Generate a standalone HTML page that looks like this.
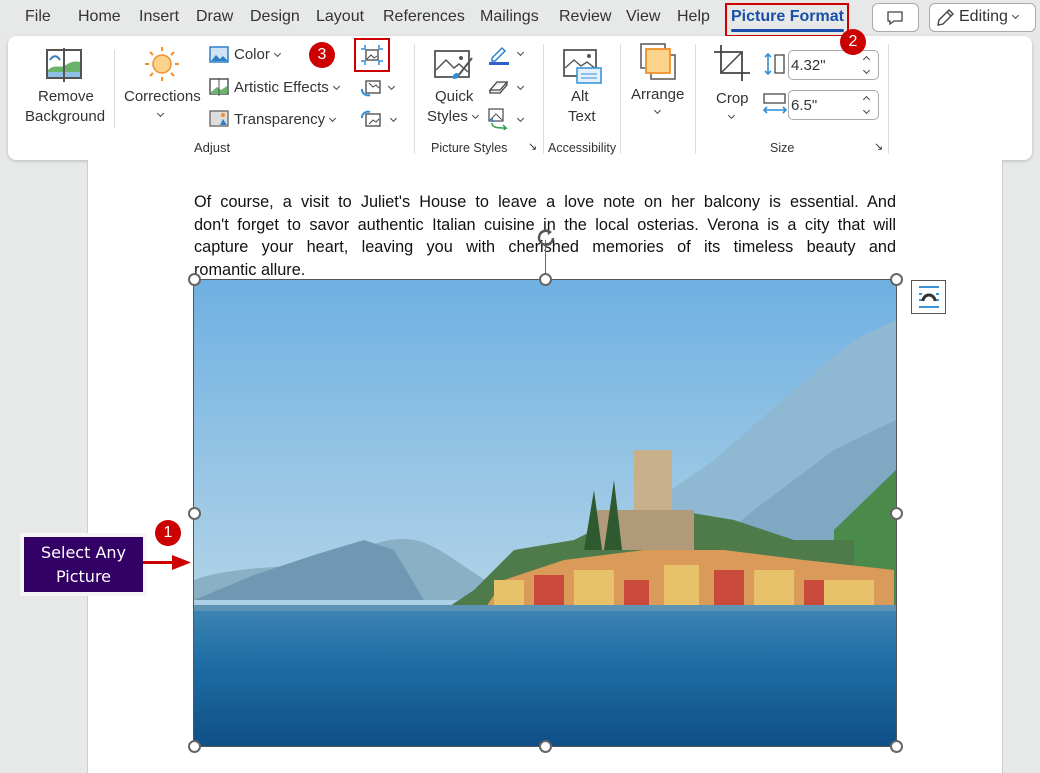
<!DOCTYPE html>
<html><head><meta charset="utf-8"><style>
*{margin:0;padding:0;box-sizing:border-box}
body{width:1040px;height:773px;overflow:hidden;background:#e6e9e7;font-family:"Liberation Sans",sans-serif;position:relative;color:#222}
.abs{position:absolute}
.tab{position:absolute;top:8px;font-size:16px;color:#333}
.ribbon{position:absolute;left:8px;top:36px;width:1024px;height:124px;background:#fff;border-radius:8px;box-shadow:0 1px 3px rgba(0,0,0,.2)}
.t{position:absolute;font-size:15px;color:#333;white-space:nowrap}
.s{position:absolute;font-size:12.5px;color:#333;white-space:nowrap}
.sep{position:absolute;top:44px;width:1px;height:110px;background:#ddd}
.badge{position:absolute;width:26px;height:26px;border-radius:50%;background:#c00;color:#fff;font-size:16px;text-align:center;line-height:26px}
.page{position:absolute;left:87px;top:160px;width:916px;height:613px;background:#fff;border-left:1px solid #ccc;border-right:1px solid #ccc}
.para{position:absolute;left:194px;top:191px;width:702px;font-size:16.3px;line-height:22.6px;color:#111}
.para div{text-align:justify;text-align-last:justify;white-space:nowrap}
.para div.l{text-align-last:left}
.h{position:absolute;width:13px;height:13px;border-radius:50%;border:2px solid #666;background:#fff}
.box{position:absolute;border:1px solid #aaa;border-radius:5px;background:#fff}
.cv{display:inline-block;width:5px;height:5px;border-right:1.3px solid #444;border-bottom:1.3px solid #444;transform:rotate(45deg);margin:0 0 3px 5px;vertical-align:middle}
.cva{position:absolute;width:5px;height:5px;border-right:1.3px solid #444;border-bottom:1.3px solid #444;transform:rotate(45deg)}
.cvu{position:absolute;width:5px;height:5px;border-left:1.3px solid #444;border-top:1.3px solid #444;transform:rotate(45deg)}
</style></head><body>
<div class="tab" style="left:25px">File</div>
<div class="tab" style="left:78px">Home</div>
<div class="tab" style="left:139px">Insert</div>
<div class="tab" style="left:196px">Draw</div>
<div class="tab" style="left:250px">Design</div>
<div class="tab" style="left:316px">Layout</div>
<div class="tab" style="left:383px">References</div>
<div class="tab" style="left:480px">Mailings</div>
<div class="tab" style="left:559px">Review</div>
<div class="tab" style="left:626px">View</div>
<div class="tab" style="left:677px">Help</div>
<div class="tab" style="left:731px;color:#1a4fa8;font-weight:bold">Picture Format</div>
<div class="abs" style="left:731px;top:29px;width:113px;height:3px;background:#1a4fa8;border-radius:2px"></div>
<div class="abs" style="left:725px;top:3px;width:124px;height:34px;border:2px solid #c00"></div>
<div class="box" style="left:872px;top:3px;width:47px;height:29px;border-radius:6px"></div>
<svg class="abs" style="left:886px;top:10px" width="18" height="16"><path d="M2 2h14v9H8l-4 3v-3H2z" fill="none" stroke="#444" stroke-width="1.3"/></svg>
<div class="box" style="left:929px;top:3px;width:107px;height:29px;border-radius:6px"></div>
<svg class="abs" style="left:934px;top:7px" width="22" height="22"><path d="M4 18l1-5L15 3l4 4L9 17z M13 5l4 4" fill="none" stroke="#444" stroke-width="1.4"/></svg>
<div class="t" style="left:959px;top:8px;font-size:16px">Editing<span class="cv"></span></div>

<div class="ribbon"></div>
<svg class="abs" style="left:46px;top:48px" width="38" height="34"><rect x="1" y="2" width="34" height="28" fill="#fff" stroke="#555" stroke-width="2"/><path d="M2 22c6-6 12-2 16-4s8-6 16-4v10H2z" fill="#6bb36b"/><path d="M2 24h32v5H2z" fill="#8fc1e8"/><path d="M4 12c3-5 7-5 10 0" fill="none" stroke="#3a7cc0" stroke-width="2"/><line x1="18" y1="0" x2="18" y2="34" stroke="#555" stroke-width="2"/></svg>
<div class="t" style="left:38px;top:88px">Remove</div>
<div class="t" style="left:25px;top:108px">Background</div>
<div class="sep" style="left:114px;top:50px;height:78px"></div>
<svg class="abs" style="left:143px;top:46px" width="38" height="36"><circle cx="19" cy="18" r="9" fill="#fbd38a" stroke="#f0902a" stroke-width="1.5"/><g stroke="#f0902a" stroke-width="2"><line x1="19" y1="1" x2="19" y2="5"/><line x1="19" y1="31" x2="19" y2="35"/><line x1="2" y1="18" x2="6" y2="18"/><line x1="32" y1="18" x2="36" y2="18"/><line x1="7" y1="6" x2="10" y2="9"/><line x1="28" y1="27" x2="31" y2="30"/><line x1="31" y1="6" x2="28" y2="9"/><line x1="7" y1="30" x2="10" y2="27"/></g></svg>
<div class="t" style="left:124px;top:88px">Corrections</div>
<div class="cva" style="left:158px;top:111px"></div>
<svg class="abs" style="left:209px;top:46px" width="20" height="18"><rect x="1" y="1" width="18" height="15" fill="#cfe3f5" stroke="#2f7fc8" stroke-width="1.5"/><path d="M2 15l5-6 4 4 3-3 5 5z" fill="#2f7fc8"/></svg>
<div class="t" style="left:234px;top:46px">Color<span class="cv"></span></div>
<svg class="abs" style="left:209px;top:78px" width="20" height="18"><rect x="1" y="1" width="18" height="15" fill="#fff" stroke="#555" stroke-width="1.5"/><path d="M2 14l6-5 4 3 6-4v8H2z" fill="#6bb36b"/><line x1="10" y1="0" x2="10" y2="18" stroke="#555"/></svg>
<div class="t" style="left:234px;top:79px">Artistic Effects<span class="cv"></span></div>
<svg class="abs" style="left:209px;top:110px" width="20" height="18"><rect x="1" y="1" width="18" height="15" fill="#ddd" stroke="#777" stroke-width="1.5"/><path d="M11 15l3-6 4 6z" fill="#2f7fc8"/><circle cx="14" cy="5" r="2" fill="#f0902a"/></svg>
<div class="t" style="left:234px;top:111px">Transparency<span class="cv"></span></div>
<div class="badge" style="left:309px;top:42px">3</div>
<div class="abs" style="left:354px;top:38px;width:36px;height:34px;border:2px solid #c00"></div>
<svg class="abs" style="left:360px;top:44px" width="24" height="22"><rect x="6" y="6" width="12" height="10" fill="#fff" stroke="#444" stroke-width="1.3"/><path d="M7 15l4-4 3 3 3-2" fill="none" stroke="#444"/><g stroke="#2f8fd8" stroke-width="1.5" fill="none"><path d="M1 5h4V1M23 5h-4V1M1 17h4v4M23 17h-4v4"/></g></svg>
<svg class="abs" style="left:360px;top:79px" width="22" height="20"><rect x="6" y="2" width="14" height="12" fill="#fff" stroke="#444" stroke-width="1.3"/><path d="M9 4l4 4 3-2 3 3" fill="none" stroke="#444"/><path d="M2 10a6 6 0 0 0 8 6" fill="none" stroke="#2f8fd8" stroke-width="2"/></svg>
<div class="cva" style="left:389px;top:84px"></div>
<svg class="abs" style="left:360px;top:110px" width="22" height="20"><rect x="6" y="4" width="14" height="12" fill="#fff" stroke="#444" stroke-width="1.3"/><path d="M9 14l4-4 3 2 3-3" fill="none" stroke="#444"/><path d="M2 8a6 6 0 0 1 8-6" fill="none" stroke="#2f8fd8" stroke-width="2"/></svg>
<div class="cva" style="left:391px;top:116px"></div>
<div class="t" style="left:194px;top:140px;font-size:13px">Adjust</div>
<div class="sep" style="left:414px"></div>
<svg class="abs" style="left:434px;top:48px" width="40" height="36"><rect x="1" y="3" width="34" height="26" fill="#fff" stroke="#555" stroke-width="1.8"/><path d="M2 22l10-10 8 8 5-4 9 8" fill="none" stroke="#555" stroke-width="1.5"/><circle cx="27" cy="10" r="2" fill="#555"/><path d="M38 10L24 28" stroke="#555" stroke-width="2"/><path d="M18 30c2-6 6-6 7-3 -1 4-4 5-7 3z" fill="#2f8fd8"/></svg>
<div class="t" style="left:435px;top:88px">Quick</div>
<div class="t" style="left:427px;top:108px">Styles<span class="cv"></span></div>
<svg class="abs" style="left:488px;top:44px" width="22" height="22"><path d="M4 14L14 4l3 3L7 17H4z" fill="none" stroke="#2f7fc8" stroke-width="1.5"/><rect x="1" y="18" width="20" height="3" fill="#2f5fc8"/></svg>
<div class="cva" style="left:518px;top:50px"></div>
<svg class="abs" style="left:488px;top:78px" width="22" height="18"><path d="M2 12l7-8h10l-7 8z M2 12v3h10l7-8v-3" fill="#eee" stroke="#444" stroke-width="1.3"/></svg>
<div class="cva" style="left:518px;top:84px"></div>
<svg class="abs" style="left:488px;top:108px" width="24" height="22"><rect x="1" y="1" width="14" height="12" fill="#fff" stroke="#555" stroke-width="1.3"/><path d="M2 12l6-6 6 6" fill="none" stroke="#555"/><path d="M4 15c0 5 6 5 14 5l-3-3m3 3l-3 3" fill="none" stroke="#2f9f4f" stroke-width="1.5"/><path d="M4 14v-4" stroke="#2f8fd8" stroke-width="2"/></svg>
<div class="cva" style="left:518px;top:116px"></div>
<div class="s" style="left:431px;top:141px">Picture Styles</div>
<div class="s" style="left:528px;top:140px;font-size:11px">↘</div>
<div class="sep" style="left:543px"></div>
<svg class="abs" style="left:563px;top:48px" width="40" height="36"><rect x="1" y="2" width="32" height="26" fill="#fff" stroke="#555" stroke-width="1.8"/><path d="M2 20l9-8 7 6 6-4 9 7" fill="none" stroke="#555" stroke-width="1.4"/><circle cx="26" cy="8" r="2" fill="#555"/><rect x="14" y="20" width="24" height="15" fill="#e4f0fb" stroke="#2f8fd8" stroke-width="1.5"/><path d="M18 26h16M18 30h16" stroke="#2f8fd8"/></svg>
<div class="t" style="left:571px;top:88px">Alt</div>
<div class="t" style="left:568px;top:108px">Text</div>
<div class="s" style="left:548px;top:141px">Accessibility</div>
<div class="sep" style="left:620px"></div>
<svg class="abs" style="left:640px;top:43px" width="38" height="38"><rect x="1" y="1" width="24" height="24" fill="#fff" stroke="#555" stroke-width="1.5"/><rect x="11" y="12" width="24" height="24" fill="#fff" stroke="#555" stroke-width="1.5"/><rect x="6" y="6" width="24" height="24" fill="#fbd38a" stroke="#f0902a" stroke-width="1.8"/></svg>
<div class="t" style="left:631px;top:86px">Arrange</div>
<div class="cva" style="left:655px;top:108px"></div>
<div class="sep" style="left:695px"></div>
<svg class="abs" style="left:713px;top:44px" width="38" height="38"><path d="M8 1v28h29M1 8h28v29" fill="none" stroke="#444" stroke-width="1.8"/><path d="M8 29L29 8" stroke="#444" stroke-width="1.5"/></svg>
<div class="t" style="left:716px;top:90px">Crop</div>
<div class="cva" style="left:729px;top:113px"></div>
<svg class="abs" style="left:763px;top:53px" width="24" height="22"><path d="M5 1v20M2 4l3-3 3 3M2 18l3 3 3-3" fill="none" stroke="#2f8fd8" stroke-width="1.6"/><rect x="12" y="2" width="9" height="18" fill="#fff" stroke="#555" stroke-width="1.4"/></svg>
<div class="box" style="left:788px;top:50px;width:91px;height:30px"></div>
<div class="t" style="left:791px;top:57px;font-size:15px">4.32"</div>
<div class="cvu" style="left:864px;top:57px"></div><div class="cva" style="left:864px;top:68px"></div>
<svg class="abs" style="left:763px;top:93px" width="24" height="22"><rect x="1" y="1" width="21" height="9" fill="#fff" stroke="#555" stroke-width="1.4"/><path d="M1 17h22M4 14l-3 3 3 3M20 14l3 3-3 3" fill="none" stroke="#2f8fd8" stroke-width="1.6"/></svg>
<div class="box" style="left:788px;top:90px;width:91px;height:30px"></div>
<div class="t" style="left:791px;top:97px;font-size:15px">6.5"</div>
<div class="cvu" style="left:864px;top:97px"></div><div class="cva" style="left:864px;top:108px"></div>
<div class="s" style="left:770px;top:141px">Size</div>
<div class="s" style="left:874px;top:140px;font-size:11px">↘</div>
<div class="sep" style="left:888px"></div>
<div class="badge" style="left:840px;top:29px">2</div>

<div class="page"></div>
<div class="para">
<div>Of course, a visit to Juliet's House to leave a love note on her balcony is essential. And</div>
<div>don't forget to savor authentic Italian cuisine in the local osterias. Verona is a city that will</div>
<div>capture your heart, leaving you with cherished memories of its timeless beauty and</div>
<div class="l">romantic allure.</div>
</div>

<svg class="abs" style="left:194px;top:280px" width="702" height="466" viewBox="0 0 702 466" preserveAspectRatio="none">
<defs><linearGradient id="sky" x1="0" y1="0" x2="0" y2="1"><stop offset="0" stop-color="#6fb0e2"/><stop offset="0.6" stop-color="#a9cfe6"/><stop offset="1" stop-color="#b7d5e3"/></linearGradient>
<linearGradient id="sea" x1="0" y1="0" x2="0" y2="1"><stop offset="0" stop-color="#3f86b4"/><stop offset="0.4" stop-color="#1f6ea6"/><stop offset="1" stop-color="#0e4f86"/></linearGradient></defs>
<rect width="702" height="466" fill="url(#sky)"/>
<path d="M330 330L420 250 520 180 600 110 660 60 702 40V330z" fill="#8fb9d2"/>
<path d="M440 330L560 230 640 170 702 140V330z" fill="#7fa9c3"/>
<path d="M0 300c40-15 90-10 130-20s60-25 90-20 60 40 110 60H0z" fill="#8ab0c6"/>
<path d="M0 320l60-25 60-20 50-15 30 10 30 50H0z" fill="#6f98b2"/>
<path d="M640 250l62-60v140h-62z" fill="#4a8a4a"/>
<path d="M250 330l30-20 40-40 60-10 40-20 60-10 60 10 60 20 60 0v70z" fill="#4f7a4a"/>
<path d="M290 330l20-30 60-20 80-10 80 0 80 10 90 10v40z" fill="#d99a5a"/>
<g fill="#e8c26a"><rect x="300" y="300" width="30" height="25"/><rect x="380" y="290" width="40" height="35"/><rect x="470" y="285" width="35" height="40"/><rect x="560" y="290" width="40" height="35"/><rect x="630" y="300" width="50" height="25"/></g>
<g fill="#c94a3a"><rect x="340" y="295" width="30" height="30"/><rect x="430" y="300" width="25" height="25"/><rect x="520" y="290" width="30" height="35"/><rect x="610" y="300" width="20" height="25"/></g>
<rect x="440" y="170" width="38" height="90" fill="#c8b08a"/>
<rect x="400" y="230" width="100" height="40" fill="#b09a7a"/>
<path d="M390 270l10-60 8 60z M410 270l10-70 8 70z" fill="#2f5a2f"/>
<rect y="325" width="702" height="141" fill="url(#sea)"/>
<rect y="325" width="702" height="6" fill="#5e94b3"/>
</svg>
<div class="abs" style="left:193px;top:279px;width:704px;height:468px;border:1px solid #555"></div>
<div class="abs" style="left:545px;top:240px;width:1px;height:40px;background:#666"></div>
<svg class="abs" style="left:533px;top:225px" width="26" height="26"><path d="M20 13a7 7 0 1 1-3-6" fill="none" stroke="#555" stroke-width="2.5"/><path d="M14 4l5 3-4 3" fill="#555"/></svg>
<div class="h" style="left:188px;top:273px"></div><div class="h" style="left:539px;top:273px"></div><div class="h" style="left:890px;top:273px"></div>
<div class="h" style="left:188px;top:507px"></div><div class="h" style="left:890px;top:507px"></div>
<div class="h" style="left:188px;top:740px"></div><div class="h" style="left:539px;top:740px"></div><div class="h" style="left:890px;top:740px"></div>
<div class="abs" style="left:911px;top:280px;width:35px;height:34px;border:1px solid #555;background:#fff"></div>
<svg class="abs" style="left:916px;top:285px" width="26" height="24"><path d="M3 2h20M3 22h20M3 9h3M20 9h3M3 15h3M20 15h3" stroke="#3a95d8" stroke-width="2"/><path d="M7 16a6 6 0 0 1 12 0" fill="none" stroke="#333" stroke-width="3"/></svg>

<div class="abs" style="left:20px;top:533px;width:127px;height:63px;background:#f5f5f5"></div>
<div class="abs" style="left:24px;top:537px;width:119px;height:55px;background:#330066;color:#fff;font-family:'Comic Sans MS','DejaVu Sans',sans-serif;font-size:16px;text-align:center;line-height:24px;padding-top:4px">Select Any<br>Picture</div>
<div class="abs" style="left:143px;top:561px;width:34px;height:3px;background:#c00"></div>
<svg class="abs" style="left:172px;top:555px" width="20" height="15"><path d="M0 0l19 7.5L0 15z" fill="#c00"/></svg>
<div class="badge" style="left:155px;top:520px">1</div>
</body></html>
